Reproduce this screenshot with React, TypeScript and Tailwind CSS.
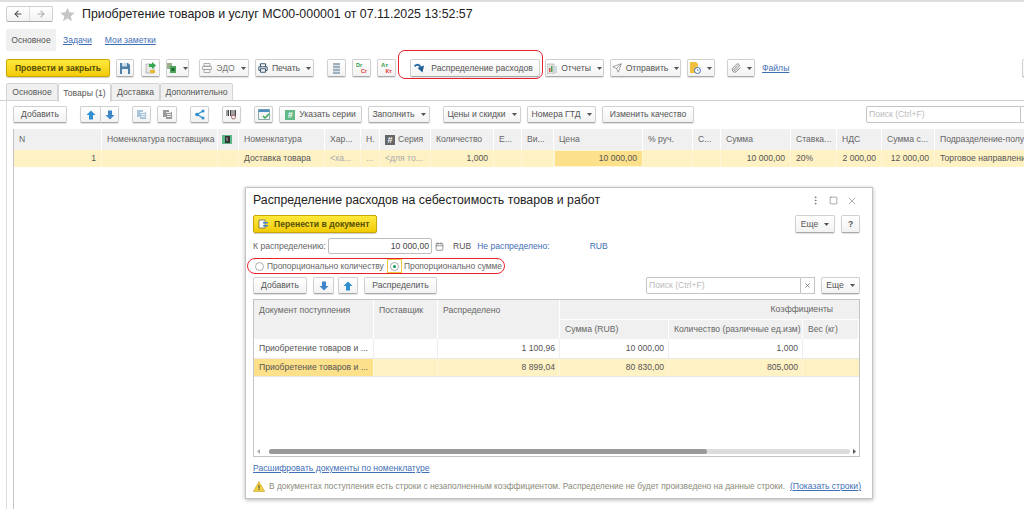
import { ReactNode } from "react"
import { ArrowLeft, ArrowRight, Paperclip, Send, Printer, Calendar, X, Square, EllipsisVertical } from "lucide-react"

const btn = "h-full flex items-center justify-center gap-1 shrink-0 rounded-[2px] border border-[#d0d0d0] border-b-[#a9a9a9] bg-gradient-to-b from-white to-[#f2f2f2] shadow-[0_1px_1px_rgba(0,0,0,0.12)] text-[#555] whitespace-nowrap"

function Btn({ className, children }: { className: string; children: ReactNode }) {
    return <div className={btn + " " + className}>{children}</div>
}

function Caret() {
    return <svg width="5" height="3" viewBox="0 0 5 3" className="shrink-0 ml-[2px]"><path d="M0 0h5L2.5 3z" fill="#555" /></svg>
}

function Up() {
    return <svg width="10" height="10" viewBox="0 0 10 10"><path d="M5 0.5 9.5 5H7v4.5H3V5H0.5z" fill="#2f8fd0" /></svg>
}

function Down() {
    return <svg width="10" height="10" viewBox="0 0 10 10"><path d="M5 9.5 9.5 5H7V0.5H3V5H0.5z" fill="#3f86c8" /></svg>
}

function Copy({ fill }: { fill: string }) {
    return <svg width="11" height="11" viewBox="0 0 11 11"><path d="M1 1h6v2h3v7H4V8H1z" fill={fill} /><path d="M4 3.5h5M5 5.5h4M5 7.5h4" stroke="#fff" strokeWidth=".8" /></svg>
}

function HeadCell({ className, children }: { className: string; children?: ReactNode }) {
    return <div className={"h-full shrink-0 flex items-center px-[5px] border-r border-[#fff] overflow-hidden whitespace-nowrap text-[#666] " + className}>{children}</div>
}

function Cell({ className, children }: { className: string; children?: ReactNode }) {
    return <div className={"h-full shrink-0 flex items-center px-[5px] border-r border-[#fff6d8] overflow-hidden whitespace-nowrap text-[#555] " + className}>{children}</div>
}

function Dialog() {
    return (
        <div className="absolute left-[245px] top-[187px] w-[628px] h-[312px] bg-white border border-[#c4c4c4] shadow-[0_1px_4px_rgba(0,0,0,0.3)] px-[7px] text-[8.6px]">
            <div className="flex items-center h-[25px]">
                <div className="text-[12.3px] text-[#222] whitespace-nowrap">Распределение расходов на себестоимость товаров и работ</div>
                <div className="ml-auto flex items-center gap-[8px] mr-[7px] text-[#666]">
                    <EllipsisVertical size={11} strokeWidth={1.5} />
                    <Square size={9} strokeWidth={1.5} />
                    <X size={12} strokeWidth={1} />
                </div>
            </div>
            <div className="flex h-[18px] mt-[2px]">
                <div className="flex items-center gap-[5px] w-[124px] h-full rounded-[2px] border border-[#c9a800] bg-gradient-to-b from-[#ffe93a] to-[#f2cb00] shadow-[0_1px_1px_rgba(0,0,0,0.2)] px-[4px] font-bold text-[#555000] whitespace-nowrap">
                    <svg width="11" height="10" viewBox="0 0 11 10"><path d="M1 1h6v8H1z" fill="#fff" stroke="#666" strokeWidth=".8" /><path d="M5 3h5v1.5H5zM5 6h5v1.500H5z" fill="#3f86c8" /></svg>
                    Перенести в документ
                </div>
                <Btn className="w-[40px] ml-auto">Еще <Caret /></Btn>
                <Btn className="w-[19px] ml-[6px] mr-[5px] font-bold">?</Btn>
            </div>
            <div className="flex items-center h-[16px] mt-[5px]">
                <span className="w-[75px] text-[#666] whitespace-nowrap">К распределению:</span>
                <div className="w-[104px] h-full flex items-center justify-end pr-[2px] border border-[#bdbdbd] rounded-[2px] text-[#444]">10 000,00</div>
                <div className="w-[14px] flex justify-center text-[#777]"><Calendar size={9} /></div>
                <span className="ml-[7px] text-[#555]">RUB</span>
                <span className="ml-[6px] text-[#3f6fb5] whitespace-nowrap">Не распределено:</span>
                <span className="ml-[40px] text-[#3f6fb5]">RUB</span>
            </div>
            <div className="flex items-center w-[258px] h-[16px] mt-[4px] -ml-[6px] pl-[7px] border border-[#e8202a] rounded-full text-[8.4px] text-[#666] whitespace-nowrap">
                <span className="w-[9px] h-[9px] rounded-full border border-[#aaa] bg-white shrink-0" />
                <span className="ml-[3px] w-[120px]">Пропорционально количеству</span>
                <span className="w-[15px] h-[14px] flex items-center justify-center border border-[#f0c840] shrink-0">
                    <span className="w-[9px] h-[9px] rounded-full border border-[#aaa] flex items-center justify-center"><span className="w-[3px] h-[3px] rounded-full bg-[#0a9a50]" /></span>
                </span>
                <span className="ml-[2px]">Пропорционально сумме</span>
            </div>
            <div className="flex h-[17px] mt-[3px]">
                <Btn className="w-[54px]">Добавить</Btn>
                <Btn className="w-[21px] ml-[6px]"><Down /></Btn>
                <Btn className="w-[20px] ml-[4px]"><Up /></Btn>
                <Btn className="w-[73px] ml-[6px]">Распределить</Btn>
                <div className="w-[155px] ml-auto h-full flex items-center pl-[2px] border border-[#c4c4c4] rounded-l-[2px] text-[#bbb]">Поиск (Ctrl+F)</div>
                <div className="w-[14px] h-full flex items-center justify-center border border-l-0 border-[#c4c4c4] text-[#666]"><X size={7} strokeWidth={2.5} /></div>
                <Btn className="w-[39px] ml-[6px] mr-[5px]">Еще <Caret /></Btn>
            </div>
            <div className="w-[607px] h-[158px] mt-[5px] border border-[#c4c4c4] flex flex-col">
                <div className="flex h-[39px] bg-[#f0f0f0] shrink-0">
                    <HeadCell className="w-[120px] !items-start pt-[4px]">Документ поступления</HeadCell>
                    <HeadCell className="w-[64px] !items-start pt-[4px]">Поставщик</HeadCell>
                    <HeadCell className="w-[122px] !items-start pt-[4px]">Распределено</HeadCell>
                    <div className="flex-1 flex flex-col">
                        <div className="h-[20px] flex items-center justify-end pr-[26px] border-b border-white text-[#666]">Коэффициенты</div>
                        <div className="flex h-[19px]">
                            <HeadCell className="w-[109px]">Сумма (RUB)</HeadCell>
                            <HeadCell className="w-[134px]">Количество (различные ед.изм)</HeadCell>
                            <HeadCell className="flex-1 shrink">Вес (кг)</HeadCell>
                        </div>
                    </div>
                </div>
                <div className="flex h-[20px] shrink-0 border-b border-[#e8e8e8]">
                    <div className="w-[120px] px-[5px] flex items-center border-r border-[#eee] whitespace-nowrap text-[#555]">Приобретение товаров и ...</div>
                    <div className="w-[64px] border-r border-[#eee]" />
                    <div className="w-[122px] px-[4px] flex items-center justify-end border-r border-[#eee] text-[#555]">1 100,96</div>
                    <div className="w-[109px] px-[4px] flex items-center justify-end border-r border-[#eee] text-[#555]">10 000,00</div>
                    <div className="w-[134px] px-[4px] flex items-center justify-end border-r border-[#eee] text-[#555]">1,000</div>
                </div>
                <div className="flex h-[18px] shrink-0 bg-[#fef1c4] border-b border-[#e8e8e8]">
                    <Cell className="w-[120px] bg-[#fde08a]">Приобретение товаров и ...</Cell>
                    <Cell className="w-[64px]" />
                    <Cell className="w-[122px] justify-end !px-[4px]">8 899,04</Cell>
                    <Cell className="w-[109px] justify-end !px-[4px]">80 830,00</Cell>
                    <Cell className="w-[134px] justify-end !px-[4px]">805,000</Cell>
                </div>
                <div className="mt-auto mb-[1px] h-[7px] flex items-center px-[3px]">
                    <svg width="3" height="5" viewBox="0 0 3 5"><path d="M3 0v5L0 2.500z" fill="#aaa" /></svg>
                    <div className="ml-[9px] w-[581px] h-[5px] rounded-full bg-[#dcdcdc]">
                        <div className="w-[438px] h-full rounded-full bg-[#999]" />
                    </div>
                    <svg width="3" height="5" viewBox="0 0 3 5" className="ml-[3px]"><path d="M0 0v5L3 2.500z" fill="#555" /></svg>
                </div>
            </div>
            <div className="mt-[6px] h-[11px] flex items-center text-[#3f6fb5] underline whitespace-nowrap">Расшифровать документы по номенклатуре</div>
            <div className="mt-[6px] h-[12px] flex items-center whitespace-nowrap">
                <svg width="12" height="11" viewBox="0 0 12 11"><path d="M6 0.500 11.800 10.500H.2z" fill="#f3cf3f" stroke="#b89a20" strokeWidth=".5" /><path d="M5.500 4h1v3.500h-1zM5.500 8h1v1h-1z" fill="#444" /></svg>
                <span className="ml-[4px] w-[521px] text-[8.4px] text-[#8b8b7a]">В документах поступления есть строки с незаполненным коэффициентом. Распределение не будет произведено на данные строки.</span>
                <span className="text-[#3f6fb5] underline">(Показать строки)</span>
            </div>
        </div>
    )
}

export default function App() {
    return (
        <div className="relative w-[1024px] h-[509px] overflow-hidden bg-white text-[8.6px] text-[#555]" style={{ fontFamily: '"Liberation Sans", Arial, sans-serif' }}>
            <div className="h-[2px] bg-[#dedede]" />

            <div className="flex items-center h-[16px] mt-[4px] ml-[6px]">
                <div className="flex h-full w-[47px] rounded-[2px] border border-[#d0d0d0] border-b-[#a9a9a9] bg-gradient-to-b from-white to-[#f2f2f2]">
                    <div className="flex-1 flex items-center justify-center border-r border-[#ddd]"><ArrowLeft size={10} strokeWidth={2.5} color="#444" /></div>
                    <div className="flex-1 flex items-center justify-center"><ArrowRight size={10} strokeWidth={2.5} color="#aaa" /></div>
                </div>
                <svg width="15" height="15" viewBox="0 0 24 24" className="ml-[7px]"><path d="M12 1l3.300 7.500 8 .8-6 5.400 1.800 8L12 18.500 4.900 22.700l1.800-8-6-5.400 8-.8z" fill="#c6c6c6" /></svg>
                <div className="ml-[7px] text-[12.4px] text-[#222] whitespace-nowrap">Приобретение товаров и услуг МС00-000001 от 07.11.2025 13:52:57</div>
            </div>

            <div className="flex items-center h-[22px] mt-[7px] ml-[6px]">
                <div className="w-[50px] h-full flex items-center justify-center bg-[#f0f0f0] rounded-[2px]">Основное</div>
                <a className="ml-[7px] text-[#3f6fb5] underline">Задачи</a>
                <a className="ml-[13px] text-[#3f6fb5] underline">Мои заметки</a>
            </div>

            <div className="flex h-[18px] mt-[8px] ml-[6px] relative">
                <div className="w-[104px] h-full shrink-0 flex items-center justify-center rounded-[2px] border border-[#c9a800] bg-gradient-to-b from-[#ffe93a] to-[#f2cb00] shadow-[0_1px_1px_rgba(0,0,0,0.2)] font-bold text-[#555000] whitespace-nowrap">Провести и закрыть</div>
                <Btn className="w-[18px] ml-[6px]">
                    <svg width="10" height="11" viewBox="0 0 10 11"><path d="M0 0h8l2 2v9H0z" fill="#4f7fa6" /><path d="M2 0h5v3.500H2z" fill="#cfdde8" /><path d="M2 6h6v5H2z" fill="#eef2f5" /></svg>
                </Btn>
                <Btn className="w-[19px] ml-[7px]">
                    <svg width="12" height="12" viewBox="0 0 12 12"><path d="M1 2h8v9H1z" fill="#e6e6e6" stroke="#999" strokeWidth=".6" /><path d="M7 0l4 3.500-4 3.500V5H4V2h3z" fill="#36a84f" /><path d="M5 8h5v3H5z" fill="#e8b930" /></svg>
                </Btn>
                <Btn className="w-[23px] ml-[6px]">
                    <svg width="10" height="11" viewBox="0 0 10 11"><path d="M0 0h5v6H0z" fill="#9bb08e" /><path d="M3 3h6v7H3z" fill="#4ca35a" /><path d="M4.500 5h3v3h-3z" fill="#1d6b33" /></svg>
                    <Caret />
                </Btn>
                <Btn className="w-[50px] ml-[10px] text-[#777]">
                    <svg width="10" height="10" viewBox="0 0 10 10" fill="none" stroke="#999" strokeWidth=".8"><path d="M2 .5h6v2.500H2zM.5 3.500h9v3h-9zM2 6.500h6v3H2z" /></svg>
                    ЭДО <Caret />
                </Btn>
                <Btn className="w-[59px] ml-[6px]"><Printer size={10} color="#3d5a73" strokeWidth={2.5} />Печать <Caret /></Btn>
                <Btn className="w-[19px] ml-[13px]">
                    <svg width="7" height="11" viewBox="0 0 7 11"><path d="M0 0h7v11H0z" fill="#9fb0bf" /><path d="M0 2.500h7M0 5.500h7M0 8.500h7" stroke="#e6ecf1" strokeWidth=".8" /></svg>
                </Btn>
                <Btn className="w-[19px] ml-[6px] flex-col !gap-0 text-[5.5px] font-bold leading-[6px]">
                    <span className="self-start ml-[3px] text-[#2f9a4a]">Dr</span><span className="self-end mr-[3px] text-[#e0403a]">Cr</span>
                </Btn>
                <Btn className="w-[19px] ml-[6px] flex-col !gap-0 text-[6px] font-bold leading-[6px]">
                    <span className="self-start ml-[3px] text-[#2f9a4a]">Ат</span><span className="self-end mr-[3px] text-[#e0403a]">Кт</span>
                </Btn>
                <div className="ml-[14px] w-[130px] h-full relative shrink-0">
                    <Btn className="w-full !gap-[6px] pr-[3px]">
                        <svg width="11" height="10" viewBox="0 0 11 10"><path d="M0.500 3.500C2.500 1 5 1 6.500 4" stroke="#2b6ea6" strokeWidth="2" fill="none" /><path d="M3.500 5 10 2.500 8.500 9.500z" fill="#1f5f96" /></svg>
                        Распределение расходов
                    </Btn>
                    <div className="absolute -left-[12px] -right-[3px] -top-[9px] -bottom-[2px] rounded-[7px] border border-[#e8202a]" />
                </div>
                <Btn className="w-[59px] ml-[5px]">
                    <svg width="10" height="11" viewBox="0 0 10 11"><path d="M0 1h7v10H0z" fill="#e4e4e4" stroke="#999" strokeWidth=".5" /><path d="M2 5h1.500v4H2z" fill="#d9534f" /><path d="M4 3h1.500v6H4z" fill="#4ca35a" /><path d="M7 3h3v7H7z" fill="#cfd8df" /></svg>
                    Отчеты <Caret />
                </Btn>
                <Btn className="w-[71px] ml-[6px]"><Send size={10} strokeWidth={1.2} />Отправить <Caret /></Btn>
                <Btn className="w-[28px] ml-[6px]">
                    <svg width="11" height="12" viewBox="0 0 11 12"><path d="M0 0h6l2 2v9H0z" fill="#f0c040" /><circle cx="7.500" cy="8.500" r="3" fill="#fff" stroke="#3f6fb5" /><path d="M7.500 7v1.500h1.200" stroke="#3f6fb5" fill="none" strokeWidth=".7" /></svg>
                    <Caret />
                </Btn>
                <Btn className="w-[28px] ml-[12px]"><Paperclip size={10} color="#777" /><Caret /></Btn>
                <a className="ml-[7px] self-center text-[#3f6fb5] underline">Файлы</a>
                <Btn className="w-[10px] ml-[233px]">{null}</Btn>
            </div>

            <div className="flex h-[18px] mt-[6px] pl-[6px] border-b border-[#cfcfcf]">
                <div className="w-[52px] h-[18px] flex items-center justify-center bg-[#f0f0f0] border border-[#d4d4d4] rounded-t-[2px]">Основное</div>
                <div className="w-[53px] h-[19px] flex items-center justify-center bg-white border border-b-0 border-[#d4d4d4] rounded-t-[2px] z-10">Товары (1)</div>
                <div className="w-[49px] h-[18px] flex items-center justify-center bg-[#f0f0f0] border border-[#d4d4d4] rounded-t-[2px]">Доставка</div>
                <div className="w-[73px] h-[18px] flex items-center justify-center bg-[#f0f0f0] border border-[#d4d4d4] rounded-t-[2px]">Дополнительно</div>
            </div>

            <div className="ml-[6px] pl-[6px] pt-[5px] h-[408px] border-l border-[#dcdcdc]">
                <div className="flex h-[17px]">
                    <Btn className="w-[54px]">Добавить</Btn>
                    <Btn className="w-[20px] ml-[13px] rounded-r-none border-r-0"><Up /></Btn>
                    <Btn className="w-[19px] rounded-l-none"><Down /></Btn>
                    <Btn className="w-[19px] ml-[13px]"><Copy fill="#a9c4d8" /></Btn>
                    <Btn className="w-[20px] ml-[6px]"><Copy fill="#9a9a9a" /></Btn>
                    <Btn className="w-[19px] ml-[13px]">
                        <svg width="11" height="11" viewBox="0 0 11 11"><path d="M9 2 3 5.500 9 9" stroke="#2f8fd0" strokeWidth="1.200" fill="none" /><circle cx="9" cy="2" r="1.500" fill="#2f8fd0" /><circle cx="3" cy="5.500" r="1.800" fill="#2f8fd0" /><circle cx="9" cy="9" r="1.500" fill="#2f8fd0" /></svg>
                    </Btn>
                    <Btn className="w-[19px] ml-[13px]">
                        <svg width="11" height="11" viewBox="0 0 11 11"><path d="M1 1v6M2.500 1v6M4.500 1v6M6 1v6M8 1v6M9.500 1v6" stroke="#444" /><circle cx="7.500" cy="8" r="2" fill="none" stroke="#a66" /></svg>
                    </Btn>
                    <Btn className="w-[19px] ml-[13px]">
                        <svg width="12" height="11" viewBox="0 0 12 11"><path d="M.5.500h11v10H.5z" fill="#f4f4f4" stroke="#8aa" /><path d="M.5.500h11v2.500H.5z" fill="#4f8fc0" /><path d="m5 7 2 2 4-4" stroke="#3aa84f" strokeWidth="1.500" fill="none" /></svg>
                    </Btn>
                    <Btn className="w-[83px] ml-[6px]">
                        <span className="w-[10px] h-[10px] bg-[#62b986] text-white text-[9px] leading-[10px] text-center font-bold">#</span>
                        Указать серии
                    </Btn>
                    <Btn className="w-[62px] ml-[6px]">Заполнить <Caret /></Btn>
                    <Btn className="w-[78px] ml-[13px]">Цены и скидки <Caret /></Btn>
                    <Btn className="w-[69px] ml-[6px]">Номера ГТД <Caret /></Btn>
                    <Btn className="w-[92px] ml-[6px]">Изменить качество</Btn>
                    <div className="w-[155px] ml-[172px] h-full shrink-0 flex items-center pl-[2px] border border-[#c4c4c4] rounded-l-[2px] text-[#bbb]">Поиск (Ctrl+F)</div>
                    <div className="w-[10px] h-full shrink-0 border border-l-0 border-[#c4c4c4]" />
                </div>

                <div className="mt-[6px] h-[380px] border-l border-[#c4c4c4]">
                    <div className="flex h-[21px] bg-[#f0f0f0]">
                        <HeadCell className="w-[88px]">N</HeadCell>
                        <HeadCell className="w-[116px]">Номенклатура поставщика</HeadCell>
                        <HeadCell className="w-[21px] !px-[4px]">
                            <span className="w-[10px] h-[9px] bg-[#5db98a] flex items-center justify-center"><span className="w-[5px] h-[7px] bg-[#333] text-[#fff] text-[6px] leading-[7px] text-center">i</span></span>
                        </HeadCell>
                        <HeadCell className="w-[86px]">Номенклатура</HeadCell>
                        <HeadCell className="w-[36px]">Хар...</HeadCell>
                        <HeadCell className="w-[19px]">Н.</HeadCell>
                        <HeadCell className="w-[51px] gap-[3px]">
                            <span className="w-[10px] h-[10px] bg-[#666] text-white text-[9px] leading-[10px] text-center font-bold shrink-0">#</span>
                            Серия
                        </HeadCell>
                        <HeadCell className="w-[63px]">Количество</HeadCell>
                        <HeadCell className="w-[28px]">Е...</HeadCell>
                        <HeadCell className="w-[32px]">Ви...</HeadCell>
                        <HeadCell className="w-[89px]">Цена</HeadCell>
                        <HeadCell className="w-[50px]">% руч.</HeadCell>
                        <HeadCell className="w-[28px]">С...</HeadCell>
                        <HeadCell className="w-[70px]">Сумма</HeadCell>
                        <HeadCell className="w-[46px]">Ставка...</HeadCell>
                        <HeadCell className="w-[45px]">НДС</HeadCell>
                        <HeadCell className="w-[53px]">Сумма с...</HeadCell>
                        <HeadCell className="w-[90px]">Подразделение-получа</HeadCell>
                    </div>
                    <div className="flex h-[17px] bg-[#fef1c4]">
                        <Cell className="w-[88px] justify-end">1</Cell>
                        <Cell className="w-[116px]" />
                        <Cell className="w-[21px]" />
                        <Cell className="w-[86px]">Доставка товара</Cell>
                        <Cell className="w-[36px] !text-[#aaa]">&lt;ха...</Cell>
                        <Cell className="w-[19px] !text-[#aaa]">...</Cell>
                        <Cell className="w-[51px] !text-[#aaa]">&lt;для то...</Cell>
                        <Cell className="w-[63px] justify-end">1,000</Cell>
                        <Cell className="w-[28px]" />
                        <Cell className="w-[32px]" />
                        <Cell className="w-[89px] justify-end bg-[#fde08a] border border-[#f0b840]">10 000,00</Cell>
                        <Cell className="w-[50px]" />
                        <Cell className="w-[28px]" />
                        <Cell className="w-[70px] justify-end">10 000,00</Cell>
                        <Cell className="w-[46px]">20%</Cell>
                        <Cell className="w-[45px] justify-end">2 000,00</Cell>
                        <Cell className="w-[53px] justify-end">12 000,00</Cell>
                        <Cell className="w-[90px]">Торговое направление</Cell>
                    </div>
                </div>
            </div>

            <Dialog />
        </div>
    )
}
